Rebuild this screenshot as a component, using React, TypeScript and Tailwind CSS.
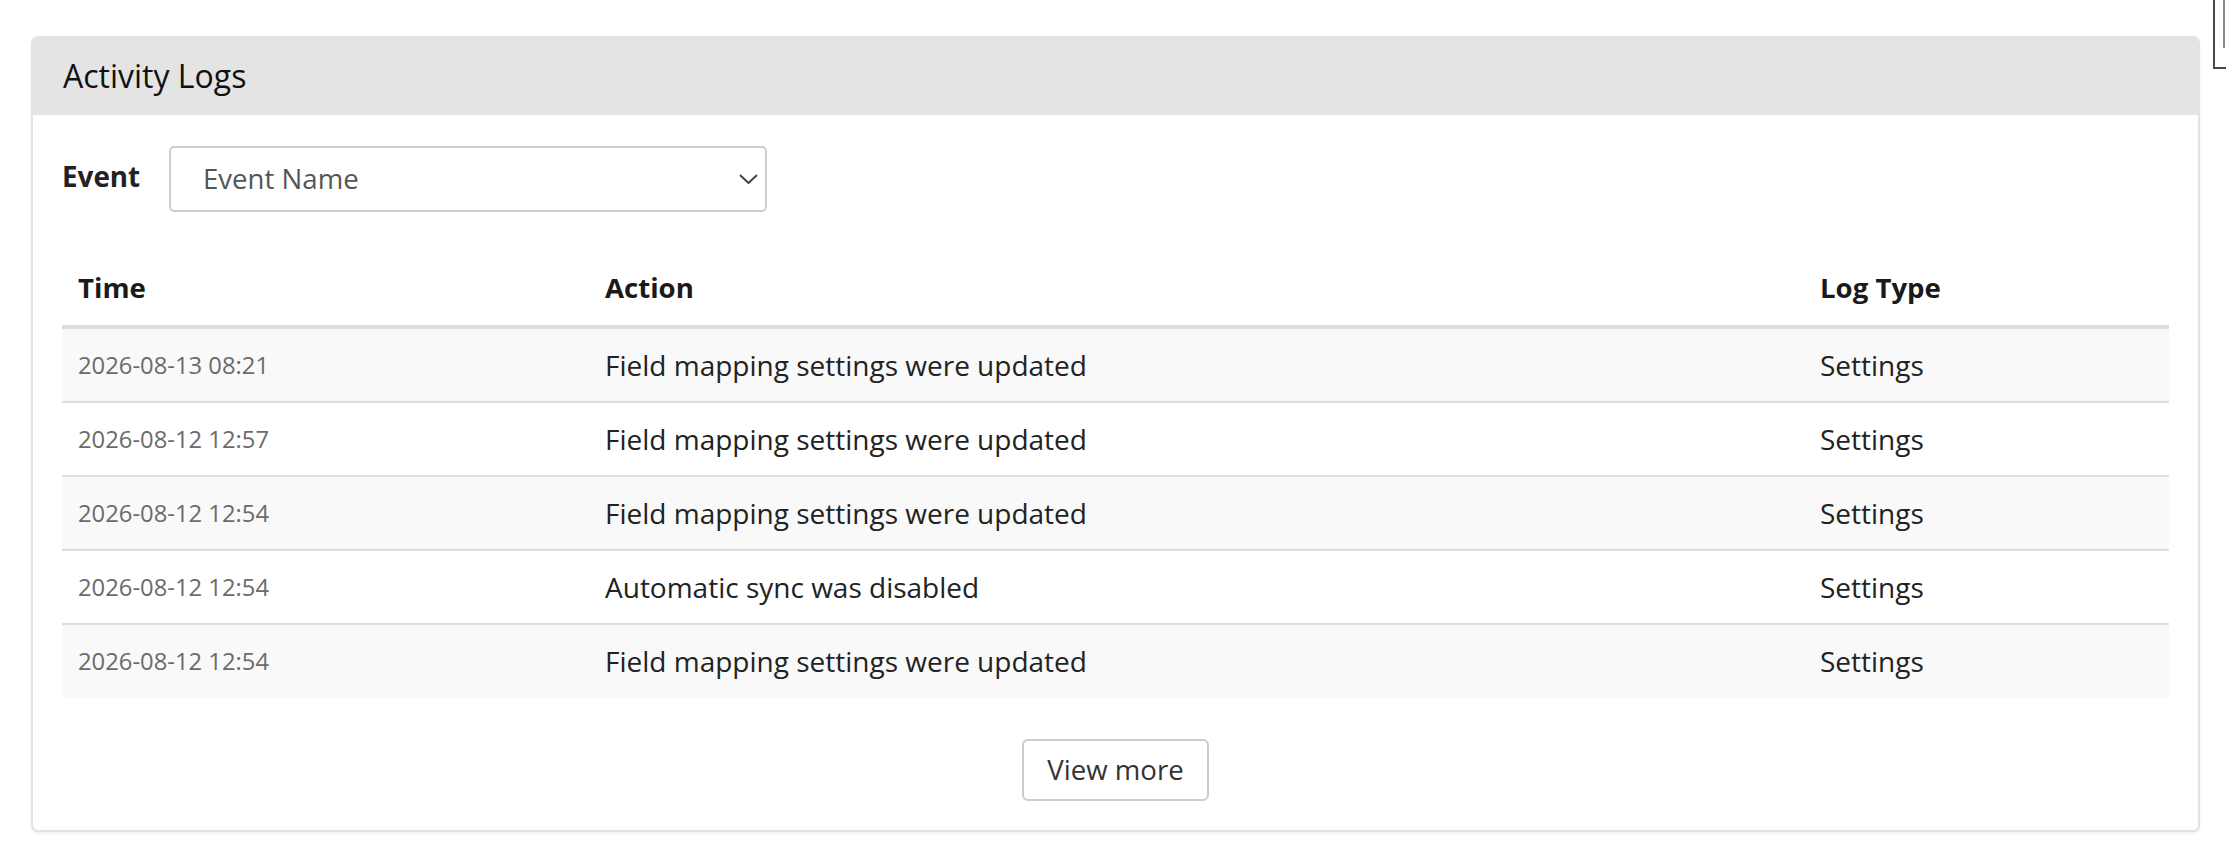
import React from "react";

type LogRow = {
  time: string;
  action: string;
  type: string;
};

const logs: LogRow[] = [
  { time: "2026-08-13 08:21", action: "Field mapping settings were updated", type: "Settings" },
  { time: "2026-08-12 12:57", action: "Field mapping settings were updated", type: "Settings" },
  { time: "2026-08-12 12:54", action: "Field mapping settings were updated", type: "Settings" },
  { time: "2026-08-12 12:54", action: "Automatic sync was disabled", type: "Settings" },
  { time: "2026-08-12 12:54", action: "Field mapping settings were updated", type: "Settings" },
];

const ChevronDown = () => (
  <svg width="19" height="10" viewBox="0 0 19 10" fill="none" className="shrink-0">
    <polyline points="1,1 9.5,9 18,1" stroke="#444" strokeWidth="2" strokeLinejoin="miter" />
  </svg>
);

const ActivityLogs = () => {
  return (
    <div className="ml-[31px] mr-[26px] mt-[36px] rounded-[7px] border-2 border-[#e3e3e3] bg-white shadow-[0_2px_3px_rgba(0,0,0,0.06)] overflow-hidden">
      <div className="h-[77px] bg-[#e4e4e4] flex items-center px-[30px]">
        <h2 className="text-[32px] text-[#111] -mt-[2px]">Activity Logs</h2>
      </div>

      <div className="px-[29px] pt-[31px] pb-[29px]">
        <div className="flex items-center">
          <span className="w-[107px] text-[27.8px] font-bold text-[#222] -mt-[5px]">Event</span>
          <div className="w-[598px] h-[66px] rounded-[5px] border-2 border-[#cccccc] bg-white flex items-center justify-between pl-[32px] pr-[7px]">
            <span className="text-[27.6px] text-[#555]">Event Name</span>
            <ChevronDown />
          </div>
        </div>

        <div className="mt-[38px]">
          <div className="grid grid-cols-[527px_1215px_1fr] h-[79px] border-b-4 border-[#dddddd] items-center text-[27.6px] font-bold text-[#1a1a1a]">
            <div className="pl-[16px]">Time</div>
            <div className="pl-[16px]">Action</div>
            <div className="pl-[16px]">Log Type</div>
          </div>
          {logs.map((row, i) => (
            <div
              key={i}
              className={
                "grid grid-cols-[527px_1215px_1fr] items-center " +
                (i === 0 ? "h-[72px] " : "h-[74px] border-t-2 border-[#dddddd] ") +
                (i % 2 === 0 ? "bg-[#f9f9f9]" : "bg-white")
              }
            >
              <div className="pl-[16px] pt-[2px] text-[23.8px] text-[#6b6b6b]">{row.time}</div>
              <div className="pl-[16px] text-[28px] text-[#222]">{row.action}</div>
              <div className="pl-[16px] text-[28px] text-[#222]">{row.type}</div>
            </div>
          ))}
        </div>

        <div className="flex justify-center mt-[42px]">
          <button className="h-[62px] px-[23px] rounded-[6px] border-2 border-[#cccccc] bg-white text-[27.6px] text-[#333] cursor-pointer">
            View more
          </button>
        </div>
      </div>
    </div>
  );
};

export default function App() {
  return (
    <div className="relative min-h-[856px] bg-white overflow-hidden font-['Open_Sans',sans-serif]">
      {/* panel peeking in at the window's edge */}
      <div className="absolute left-[2213px] top-[-12px] w-[40px] h-[81px] border-[2.5px] border-[#4a4a4a] bg-white">
        <div className="ml-[8px] h-[58px] border-l-2 border-[#888]" />
      </div>
      <div className="pt-[0.1px]">
        <ActivityLogs />
      </div>
    </div>
  );
}
